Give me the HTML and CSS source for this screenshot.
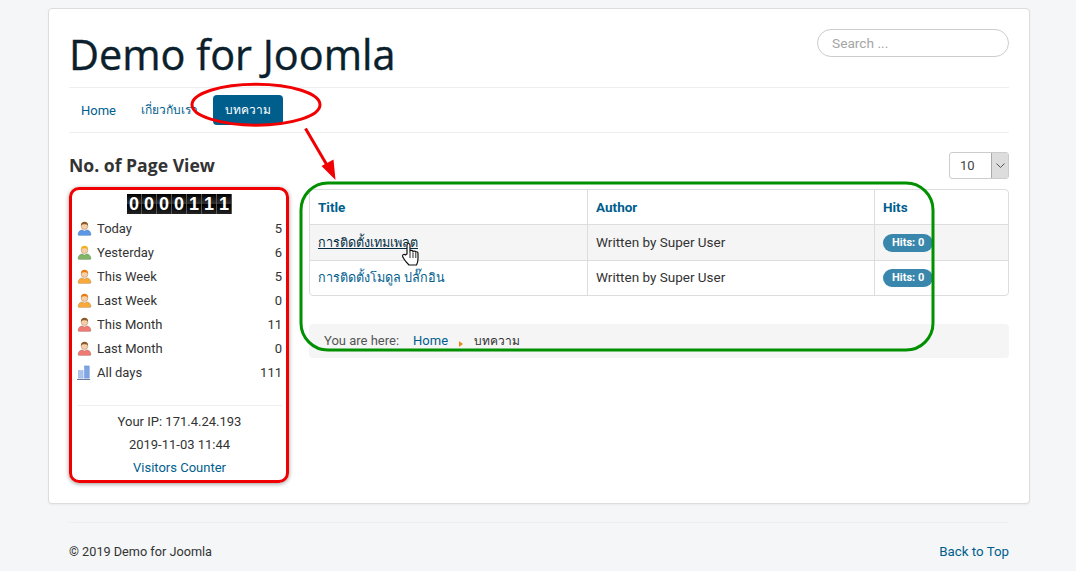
FILE: index.html
```html
<!DOCTYPE html>
<html lang="en">
<head>
<meta charset="utf-8">
<title>Demo for Joomla</title>
<link rel="stylesheet" href="styles.css">
</head>
<body>
<svg class="defs" width="0" height="0" aria-hidden="true">
  <symbol id="person" viewBox="0 0 16 16">
    <path class="shirt" d="M1 14.500c0-3 2-4.600 4.500-5.200L8 10.600l2.500-1.300c2.500.6 4.500 2.200 4.500 5.200 0 .6-.6 1-1.200 1H2.200c-.6 0-1.200-.4-1.200-1z"/>
    <circle cx="8" cy="5.400" r="3.600" fill="#f6cfa8" stroke="#b98a60" stroke-width=".6"/>
    <path class="hair" d="M4.200 5.200C3.800 2.400 5.800.8 8 .8s4.200 1.600 3.800 4.400C11 3.800 9.800 3.400 8 3.400s-3 .4-3.800 1.800z"/>
  </symbol>
  <symbol id="bars" viewBox="0 0 16 16">
    <rect x="1.500" y="6" width="5" height="8" fill="#a9c3ee" stroke="#86a6dc" stroke-width=".5"/>
    <rect x="8" y="1" width="5" height="13" fill="#7fa4e4" stroke="#658cd0" stroke-width=".5"/>
    <path d="M0 15.500h14" stroke="#5b6f8f" stroke-width="1"/>
  </symbol>
</svg>
<div class="card">
  <header class="head">
    <h1 class="brand">Demo for Joomla</h1>
    <div class="search">Search ...</div>
  </header>
  <nav class="nav">
    <a class="pill" href="#">Home</a>
    <a class="pill th" href="#">เกี่ยวกับเรา</a>
    <a class="pill th active" href="#">บทความ</a>
  </nav>
  <div class="content">
    <aside class="side">
      <h3 class="side-title">No. of Page View</h3>
      <div class="counter">
        <div class="digits">
          <span class="digit">0</span><span class="digit">0</span><span class="digit">0</span><span class="digit">0</span><span class="digit">1</span><span class="digit">1</span><span class="digit">1</span>
        </div>
        <ul class="stats">
          <li class="stat"><svg class="ico blue"><use href="#person"/></svg><span class="stat-name">Today</span><span>5</span></li>
          <li class="stat"><svg class="ico green"><use href="#person"/></svg><span class="stat-name">Yesterday</span><span>6</span></li>
          <li class="stat"><svg class="ico orange"><use href="#person"/></svg><span class="stat-name">This Week</span><span>5</span></li>
          <li class="stat"><svg class="ico orange"><use href="#person"/></svg><span class="stat-name">Last Week</span><span>0</span></li>
          <li class="stat"><svg class="ico red"><use href="#person"/></svg><span class="stat-name">This Month</span><span>11</span></li>
          <li class="stat"><svg class="ico red"><use href="#person"/></svg><span class="stat-name">Last Month</span><span>0</span></li>
          <li class="stat"><svg class="ico"><use href="#bars"/></svg><span class="stat-name">All days</span><span>111</span></li>
        </ul>
        <div class="info">
          <div class="info-line">Your IP: 171.4.24.193</div>
          <div class="info-line">2019-11-03 11:44</div>
          <div class="info-line"><a href="#">Visitors Counter</a></div>
        </div>
      </div>
    </aside>
    <main class="main">
      <div class="limit-row">
        <div class="limit"><span class="limit-val">10</span><span class="limit-btn"><svg width="9" height="5" viewBox="0 0 9 5"><path d="M.5.500 4.500 4.500 8.500.500" fill="none" stroke="#555" stroke-width="1"/></svg></span></div>
      </div>
      <div class="table">
        <div class="row row-head">
          <div class="cell c1">Title</div><div class="cell c2">Author</div><div class="cell c3">Hits</div>
        </div>
        <div class="row row-alt">
          <div class="cell c1"><a class="hover th-cell" href="#">การติดตั้งเทมเพลต</a></div><div class="cell c2">Written by Super User</div><div class="cell c3"><span class="badge">Hits: 0</span></div>
        </div>
        <div class="row">
          <div class="cell c1"><a class="th-cell" href="#">การติดตั้งโมดูล ปลั๊กอิน</a></div><div class="cell c2">Written by Super User</div><div class="cell c3"><span class="badge">Hits: 0</span></div>
        </div>
      </div>
      <div class="crumbs">
        <span class="crumb-label">You are here:</span><a href="#">Home</a><span class="crumb-sep"></span><span class="th">บทความ</span>
      </div>
    </main>
  </div>
  <svg class="marks" width="1076" height="571" viewBox="0 0 1076 571" aria-hidden="true">
    <ellipse cx="256" cy="104.700" rx="64" ry="20.500" fill="none" stroke="#f00000" stroke-width="3"/>
    <path d="M305.500 128.500 331 172" stroke="#f00000" stroke-width="3" fill="none"/>
    <path d="M335.500 180 321.500 166 333.500 159.500z" fill="#f00000"/>
    <rect x="301" y="183" width="632" height="167" rx="27" fill="none" stroke="#009000" stroke-width="3"/>
    <path d="M407 254V245c0-2 3-2 3 0v6c1-1 2.500-1 3 .5 1-.8 2.500-.6 2.800.6 1-.6 2.200 0 2.200 1.400v5c0 3-.5 4.500-1.500 6.500h-7.500c-1.500-1.500-3.500-3.500-5-6-.8-1.300-1.500-2.500-1.500-3.300 0-1.300 1.800-1.700 2.800-.8z" fill="#fff" stroke="#111" stroke-width="1.200"/>
    <path d="M410 252v6M413 252.500v5.500M415.800 253v5" stroke="#111" stroke-width=".9"/>
  </svg>
</div>
<footer class="foot">
  <span class="copy">© 2019 Demo for Joomla</span>
  <a class="top" href="#">Back to Top</a>
</footer>
</body>
</html>
```
FILE: styles.css
```css
* { box-sizing: border-box; }
html, body { margin: 0; }
body {
  background: #f4f6f7;
  font-family: Roboto, "Liberation Sans", "Noto Sans", sans-serif;
  font-size: 13px;
  line-height: 18px;
  color: #333;
  padding: 8px 46px 0 48px;
  height: 571px;
  overflow: hidden;
}
a { color: #005e8d; text-decoration: none; }
.defs { position: absolute; }
.th { font-size: 12px; }
.th-cell { font-size: 12.600px; }
.card {
  position: relative;
  height: 496px;
  background: #fff;
  border: 1px solid #dcdcdc;
  border-radius: 4px;
  padding: 0 20px;
  box-shadow: 0 1px 2px rgba(0,0,0,.05);
}
.marks { position: absolute; left: -49px; top: -9px; pointer-events: none; }
.head { display: flex; justify-content: space-between; align-items: flex-start; height: 79px; padding-top: 20px; border-bottom: 1px solid #eee; }
.brand { margin: 0; font: 400 41.400px/50px "Open Sans", sans-serif; color: #0b1f2d; -webkit-text-stroke: .4px #0b1f2d; }
.search {
  width: 192px; height: 28px; border: 1px solid #ccc; border-radius: 14px;
  padding: 0 14px; line-height: 26px; color: #a5a5a5; font-size: 13.700px;
}
.nav { display: flex; gap: 1px; height: 45px; padding-top: 7px; border-bottom: 1px solid #eee; }
.pill { display: block; height: 30px; padding: 0 12px; line-height: 31px; border-radius: 4px; }
.active { background: #005e8d; color: #fff; margin-left: 2px; }
.content { display: flex; gap: 20px; padding-top: 19px; }
.side { width: 220px; flex: none; }
.side-title { margin: 0; height: 34px; font: 700 17.600px/27px "Open Sans", sans-serif; color: #333; }
.counter {
  height: 296px; margin-top: 1px; border: 3px solid #f00000; border-radius: 10px;
  box-shadow: 0 1px 4px rgba(0,0,0,.4); padding: 4px 4px 0 5px;
}
.digits { display: flex; justify-content: center; height: 20px; }
.digit {
  width: 15px; height: 20px; text-align: center;
  background: linear-gradient(#000, #333 50%, #000 52%, #222);
  border-right: 1px solid #555;
  color: #fff; font: 700 18px/20px "Liberation Sans", sans-serif;
}
.stats { list-style: none; margin: 3px 0 0; padding: 0; }
.stat { display: flex; align-items: center; height: 24px; }
.ico { width: 15px; height: 15px; flex: none; margin-right: 5px; margin-top: -2px; }
.stat-name { flex: 1; }
.ico { --shirt: #5a98e6; --hair: #8a5a2a; }
.blue { --shirt: #5a98e6; --hair: #8a5a2a; }
.green { --shirt: #7fb565; --hair: #f0b020; }
.orange { --shirt: #f7a93c; --hair: #e87a10; }
.red { --shirt: #ee7a72; --hair: #8a5a2a; }
.shirt { fill: var(--shirt); stroke: rgba(0,0,0,.25); stroke-width: .5; }
.hair { fill: var(--hair); }
.info { margin-top: 20px; border-top: 1px solid #eee; padding-top: 4px; text-align: center; }
.info-line { height: 23px; line-height: 23px; }
.main { flex: 1; min-width: 0; }
.limit-row { display: flex; justify-content: flex-end; height: 37px; }
.limit {
  display: flex; width: 60px; height: 27px; border: 1px solid #ccc; border-radius: 3px;
  color: #444; line-height: 25px;
}
.limit-val { flex: 1; padding-left: 10px; }
.limit-btn {
  width: 17px; background: #ddd; border-left: 1px solid #aaa;
  display: flex; align-items: center; justify-content: center;
}
.table { border: 1px solid #ddd; border-radius: 4px; overflow: hidden; font-size: 13.500px; }
.row { display: flex; height: 35px; border-top: 1px solid #ddd; }
.row-head { border-top: 0; height: 34px; }
.row-alt { background: #f5f5f5; height: 36px; }
.cell { display: flex; align-items: center; padding: 0 8px; border-left: 1px solid #ddd; white-space: nowrap; }
.c1 { width: 277px; border-left: 0; }
.c2 { width: 287px; padding-bottom: 2px; }
.row-head .c2 { padding-bottom: 0; }
.c3 { flex: 1; }
.row-head .cell { font-weight: 700; color: #005e8d; }
.hover { color: #002b41; text-decoration: underline; }
.badge {
  display: block; height: 18px; padding: 0 9px; border-radius: 9px;
  background: #3a87ad; color: #fff; font-size: 11px; font-weight: 700; line-height: 18px;
}
.crumbs {
  display: flex; align-items: flex-end; height: 34px; margin-top: 28px; padding: 0 15px 8px;
  background: #f5f5f5; border-radius: 4px;
}
.crumb-label { margin-right: 14px; color: #555; }
.crumb-sep {
  width: 0; height: 0; margin: 0 11px 3px 11px; border-left: 4px solid #e8891a;
  border-top: 3.500px solid transparent; border-bottom: 3.500px solid transparent;
}
.foot {
  display: flex; justify-content: space-between; margin: 18px 21px 0 21px; padding-top: 20px;
  border-top: 1px solid #eee;
}
.copy { font-size: 12.700px; }
.top { font-size: 13.300px; }
```
